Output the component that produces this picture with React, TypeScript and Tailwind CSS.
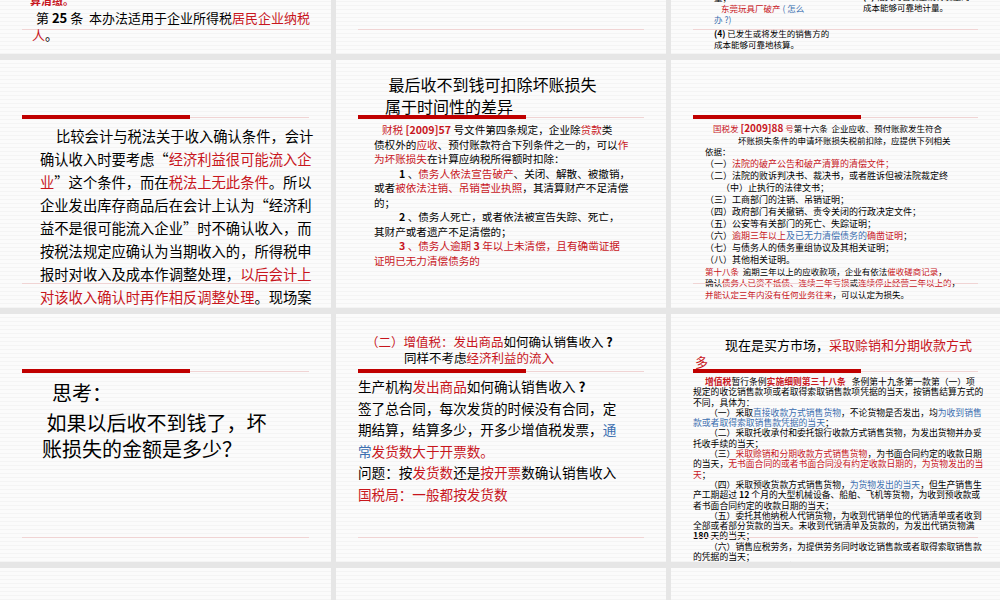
import React from "react";

const R = ({ children }: { children: React.ReactNode }) => <span className="text-[#c8161d]">{children}</span>;
const B = ({ children }: { children: React.ReactNode }) => <span className="text-[#3b6fb0]">{children}</span>;

function Slide({ children, bar = true, line = true }: { children?: React.ReactNode; bar?: boolean; line?: boolean }) {
  return (
    <div className="relative h-[248px] overflow-hidden bg-[repeating-linear-gradient(180deg,#fbfbfb_0px,#fbfbfb_3px,#f4f4f4_3px,#f4f4f4_4px)]">
      {bar && (
        <div className="absolute left-[22px] right-[22px] top-[55px] flex items-center">
          <div className="h-[4px] w-[168px] bg-[#c00000]" />
          <div className="h-px flex-1 bg-[#f0d4d4]" />
        </div>
      )}
      {line && <div className="absolute left-[22px] right-[22px] top-[223px] h-px bg-[#f0d4d4]" />}
      {children}
    </div>
  );
}

export default function App() {
  return (
    <div className="h-[600px] w-[1000px] overflow-hidden bg-[#e6e6e6]" style={{ fontFamily: '"Noto Sans CJK SC", "DejaVu Sans", sans-serif' }}>
      <div className="-mt-[194px] grid grid-cols-[331px_330px_329px] gap-x-[5px] gap-y-[6px]">
        {/* row 1 */}
        <Slide>
          <div className="absolute left-[30px] top-[186px] text-[11px] font-bold text-[#c8161d]">算清缴。</div>
          <div className="absolute left-[36px] right-[20px] top-[203px] text-[13px] leading-[17px] text-black">
            第 <b>25</b> 条&nbsp; 本办法适用于企业所得税<R>居民企业纳税</R>
            <div className="-ml-[4px]"><R>人</R>。</div>
          </div>
        </Slide>
        <Slide />
        <Slide>
          <div className="absolute left-[43px] top-[186px] w-[120px] text-[8.5px] leading-[11px] text-black">
            <div>量；</div>
            <div className="pl-[7px]"><R>东莞玩具厂破产</R> <B>( 怎么</B></div>
            <div><B>办 ?)</B></div>
            <div className="mt-[3px]"><b>(4)</b> 已发生或将发生的销售方的成本能够可靠地核算。</div>
          </div>
          <div className="absolute left-[192px] top-[185px] w-[125px] text-[8.5px] leading-[11px] text-black">
            <div><b>(5)</b> 相关的已发生或将发生的</div>
            <div>成本能够可靠地计量。</div>
          </div>
        </Slide>

        {/* row 2 */}
        <Slide>
          <div className="whitespace-nowrap pl-[40px] pt-[64px] text-[14.3px] leading-[23px] text-black">
            <div className="pl-[16px]">比较会计与税法关于收入确认条件，会计</div>
            <div>确认收入时要考虑“<R>经济利益很可能流入企</R></div>
            <div><R>业</R>”这个条件，而在<R>税法上无此条件</R>。所以</div>
            <div>企业发出库存商品后在会计上认为“经济利</div>
            <div>益不是很可能流入企业”时不确认收入，而</div>
            <div>按税法规定应确认为当期收入的，所得税申</div>
            <div>报时对收入及成本作调整处理，<R>以后会计上</R></div>
            <div><R>对该收入确认时再作相反调整处理</R>。现场案</div>
            <div>例</div>
          </div>
        </Slide>
        <Slide line={false}>
          <div className="absolute left-[49px] top-[13px] text-[16px] leading-[22px] text-black">
            <div>&nbsp;最后收不到钱可扣除坏账损失</div>
            <div>属于时间性的差异</div>
          </div>
          <div className="whitespace-nowrap pl-[38px] pt-[63px] text-[10.6px] leading-[14.5px] text-black">
            <div className="pl-[8px]"><R>财税 <b>[2009]57</b></R> 号文件第四条规定，企业除<R>贷款</R>类</div>
            <div>债权外的<R>应收</R>、预付账款符合下列条件之一的，可以<R>作</R></div>
            <div><R>为坏账损失</R>在计算应纳税所得额时扣除：</div>
            <div className="pl-[25px]"><b>1</b> 、<R>债务人依法宣告破产</R>、关闭、解散、被撤销，</div>
            <div>或者<R>被依法注销、吊销营业执照</R>，其清算财产不足清偿</div>
            <div>的；</div>
            <div className="pl-[25px]"><b>2</b> 、债务人死亡，或者依法被宣告失踪、死亡，</div>
            <div>其财产或者遗产不足清偿的；</div>
            <div className="pl-[25px]"><R><b>3</b> 、债务人逾期 <b>3</b> 年以上未清偿，且有确凿证据</R></div>
            <div><R>证明已无力清偿债务的</R></div>
          </div>
        </Slide>
        <Slide>
          <div className="whitespace-nowrap pl-[34px] pt-[62px] text-[8.5px] leading-[11.5px] text-black">
            <div className="pl-[8px]"><R>国税发 <b className="text-[10px]">[2009]88</b> 号</R>第十六条&nbsp; 企业应收、预付账款发生符合</div>
            <div className="pl-[33px]">坏账损失条件的申请坏账损失税前扣除，应提供下列相关</div>
            <div>依据：</div>
            <div className="text-[9px] leading-[12px]">
              <div>（一）<R>法院的破产公告和破产清算的清偿文件；</R></div>
              <div>（二）法院的败诉判决书、裁决书，或者胜诉但被法院裁定终</div>
              <div className="pl-[16px]">（中）止执行的法律文书；</div>
              <div>（三）工商部门的注销、吊销证明；</div>
              <div>（四）政府部门有关撤销、责令关闭的行政决定文件；</div>
              <div>（五）公安等有关部门的死亡、失踪证明；</div>
              <div>（六）<R>逾期三年以上</R><B>及已无力清偿债务的</B><R>确凿证明</R>；</div>
              <div>（七）与债务人的债务重组协议及其相关证明；</div>
              <div>（八）其他相关证明。</div>
            </div>
            <div><R>第十八条</R>&nbsp; 逾期三年以上的应收款项，企业有依法<R>催收磋商记录</R>，</div>
            <div>确认<R>债务人已资不抵债、连续三年亏损</R>或<R>连续停止经营三年以上的</R>，</div>
            <div><R>并能认定三年内没有任何业务往来</R>，可以认定为损失。</div>
          </div>
        </Slide>

        {/* row 3 */}
        <Slide>
          <div className="whitespace-nowrap pl-[42px] pt-[66px] text-[20px] leading-[26px] text-black">
            <div className="pl-[10px]">思考：</div>
            <div className="mt-[4px]">&nbsp;如果以后收不到钱了，坏</div>
            <div>账损失的金额是多少？</div>
          </div>
        </Slide>
        <Slide>
          <div className="absolute left-[30px] top-[20px] text-[12.5px] leading-[16px] text-black">
            <div><R>（二）增值税：发出商品</R>如何确认销售收入 <b>?</b></div>
            <div className="pl-[38px]">同样不考虑<R>经济利益的流入</R></div>
          </div>
          <div className="whitespace-nowrap pl-[22px] pt-[62px] text-[13.6px] leading-[21.5px] text-black">
            <div>生产机构<R>发出商品</R>如何确认销售收入 <b>?</b></div>
            <div>签了总合同，每次发货的时候没有合同，定</div>
            <div>期结算，结算多少，开多少增值税发票，<B>通</B></div>
            <div><B>常</B><R>发货数大于开票数。</R></div>
            <div>问题：按<R>发货数</R>还是<R>按开票</R>数确认销售收入</div>
            <div><R>国税局：一般都按发货数</R></div>
          </div>
        </Slide>
        <Slide>
          <div className="absolute left-[24px] right-[20px] top-[22px] text-[13px] leading-[17px] text-black">
            <div className="pl-[30px]">现在是买方市场，<R>采取赊销和分期收款方式</R></div>
            <div><R>多</R></div>
          </div>
          <div className="whitespace-nowrap pl-[22px] pt-[63px] text-[8.8px] leading-[10.3px] text-black">
            <div className="pl-[12px]"><R><b>增值税</b></R>暂行条例<R><b>实施细则第三十八条</b></R>&nbsp;&nbsp; 条例第十九条第一款第（一）项</div>
            <div>规定的收讫销售款项或者取得索取销售款项凭据的当天，按销售结算方式的</div>
            <div>不同，具体为：</div>
            <div className="pl-[16px]">（一）采取<B>直接收款方式销售货物</B>，不论货物是否发出，均<B>为收到销售</B></div>
            <div><B>款或者取得索取销售款凭据的当天</B>；</div>
            <div className="pl-[16px]">（二）采取托收承付和委托银行收款方式销售货物，为发出货物并办妥</div>
            <div>托收手续的当天；</div>
            <div className="pl-[16px]">（三）<R>采取赊销和分期收款方式销售货物</R>，为书面合同约定的收款日期</div>
            <div>的当天，<R>无书面合同的或者书面合同没有约定收款日期的，为货物发出的当</R></div>
            <div><R>天</R>；</div>
            <div className="pl-[16px]">（四）采取预收货款方式销售货物，<B>为货物发出的当天</B>，但生产销售生</div>
            <div>产工期超过 <b>12</b> 个月的大型机械设备、船舶、飞机等货物，为收到预收款或</div>
            <div>者书面合同约定的收款日期的当天；</div>
            <div className="pl-[16px]">（五）委托其他纳税人代销货物，为收到代销单位的代销清单或者收到</div>
            <div>全部或者部分货款的当天。未收到代销清单及货款的，为发出代销货物满</div>
            <div><b>180</b> 天的当天；</div>
            <div className="pl-[16px]">（六）销售应税劳务，为提供劳务同时收讫销售款或者取得索取销售款</div>
            <div>的凭据的当天；</div>
            <div className="pl-[16px]">（七）纳税人发生本细则第四条第（三）项至第（八）项所列视同销售</div>
            <div>货物行为，<B>为货物移送的当天</B>。</div>
          </div>
        </Slide>

        {/* row 4 */}
        <Slide bar={false} line={false} />
        <Slide bar={false} line={false} />
        <Slide bar={false} line={false} />
      </div>
    </div>
  );
}
